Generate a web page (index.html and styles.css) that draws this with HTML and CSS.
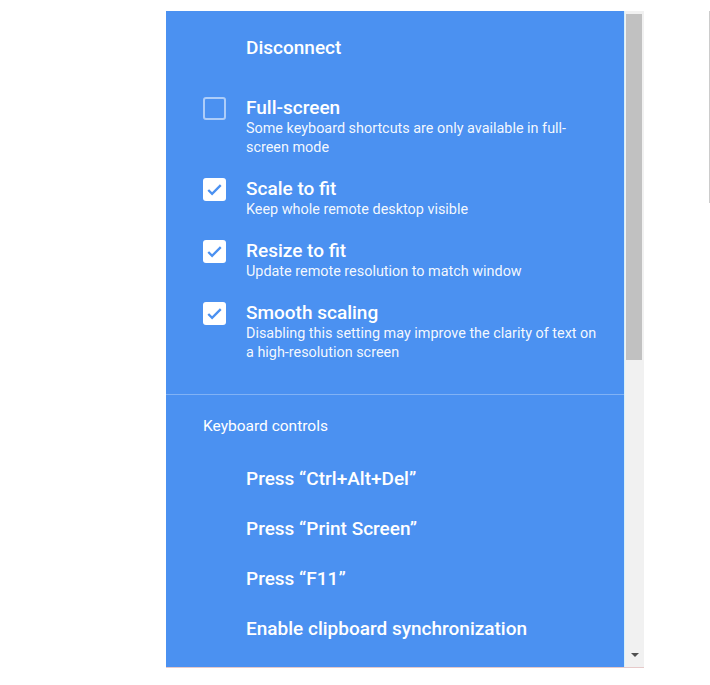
FILE: index.html
```html
<!DOCTYPE html>
<html lang="en">
<head>
<meta charset="utf-8">
<title>Options</title>
<link rel="stylesheet" href="styles.css">
</head>
<body>
<div class="frame">
  <div class="panel">
    <div class="content">
      <div class="action disconnect">Disconnect</div>
      <ul class="options">
        <li class="option">
          <span class="box"></span>
          <div class="text">
            <div class="title">Full-screen</div>
            <div class="desc">Some keyboard shortcuts are only available in full-screen mode</div>
          </div>
        </li>
        <li class="option">
          <span class="box checked"><svg viewBox="0 0 24 24" width="23" height="23"><path d="M5.5 12.5l4 4L18.5 7.5" fill="none" stroke="#4b91f1" stroke-width="2.4"/></svg></span>
          <div class="text">
            <div class="title">Scale to fit</div>
            <div class="desc">Keep whole remote desktop visible</div>
          </div>
        </li>
        <li class="option">
          <span class="box checked"><svg viewBox="0 0 24 24" width="23" height="23"><path d="M5.5 12.5l4 4L18.5 7.5" fill="none" stroke="#4b91f1" stroke-width="2.4"/></svg></span>
          <div class="text">
            <div class="title">Resize to fit</div>
            <div class="desc">Update remote resolution to match window</div>
          </div>
        </li>
        <li class="option">
          <span class="box checked"><svg viewBox="0 0 24 24" width="23" height="23"><path d="M5.5 12.5l4 4L18.5 7.5" fill="none" stroke="#4b91f1" stroke-width="2.4"/></svg></span>
          <div class="text">
            <div class="title">Smooth scaling</div>
            <div class="desc">Disabling this setting may improve the clarity of text on a high-resolution screen</div>
          </div>
        </li>
      </ul>
      <div class="section">
        <div class="heading">Keyboard controls</div>
        <div class="action row">Press “Ctrl+Alt+Del”</div>
        <div class="action row">Press “Print Screen”</div>
        <div class="action row">Press “F11”</div>
        <div class="action row">Enable clipboard synchronization</div>
      </div>
    </div>
    <div class="scrollbar">
      <div class="thumb"></div>
      <div class="track"></div>
      <div class="arrow"></div>
    </div>
  </div>
  <div class="edge"></div>
</div>
</body>
</html>
```
FILE: styles.css
```css
html, body {
  margin: 0;
  padding: 0;
  background: #ffffff;
  font-family: Roboto, "Liberation Sans", Arial, sans-serif;
}

.frame {
  display: flex;
  align-items: flex-start;
  padding-top: 11px;
  height: 674px;
}

.panel {
  margin-left: 166px;
  width: 478px;
  height: 656px;
  display: flex;
  overflow: hidden;
  border-bottom: 1px solid #e6c9c9;
}

.content {
  width: 458px;
  background: #4b91f1;
  color: #ffffff;
  border-right: 1px solid #d4f0fb;
  overflow: hidden;
}

.action {
  font-size: 19px;
  font-weight: 500;
  line-height: 22px;
  padding-left: 80px;
}

.disconnect {
  margin-top: 26px;
}

.options {
  list-style: none;
  margin: 38px 0 0;
  padding: 0 20px 0 37px;
  display: flex;
  flex-direction: column;
  gap: 21px;
}

.option {
  display: flex;
  align-items: flex-start;
  gap: 20px;
}

.box {
  flex: none;
  width: 19px;
  height: 19px;
  border: 2px solid rgba(255, 255, 255, 0.55);
  border-radius: 3px;
  display: flex;
  align-items: center;
  justify-content: center;
}

.box.checked {
  width: 23px;
  height: 23px;
  border: 0;
  background: #ffffff;
}

.title {
  font-size: 19px;
  font-weight: 500;
  line-height: 22px;
}

.desc {
  font-size: 14.4px;
  line-height: 19px;
  color: rgba(255, 255, 255, 0.95);
  max-width: 358px;
}

.section {
  margin-top: 32px;
  border-top: 1px solid rgba(255, 255, 255, 0.3);
  padding-top: 21px;
}

.heading {
  font-size: 15.5px;
  line-height: 20px;
  padding-left: 37px;
  margin-bottom: 18px;
}

.row {
  height: 50px;
  display: flex;
  align-items: center;
}

.scrollbar {
  width: 19px;
  background: #f1f1f1;
  display: flex;
  flex-direction: column;
  padding-top: 3px;
}

.thumb {
  height: 346px;
  margin: 0 2px 0 1px;
  background: #c1c1c1;
}

.track {
  flex: 1;
}

.arrow {
  height: 14px;
  display: flex;
  justify-content: center;
}

.arrow::before {
  content: "";
  width: 0;
  height: 0;
  border-left: 4px solid transparent;
  border-right: 4px solid transparent;
  border-top: 4px solid #505050;
}

.edge {
  margin-left: 65px;
  width: 1px;
  height: 192px;
  background: #cccccc;
}
```
